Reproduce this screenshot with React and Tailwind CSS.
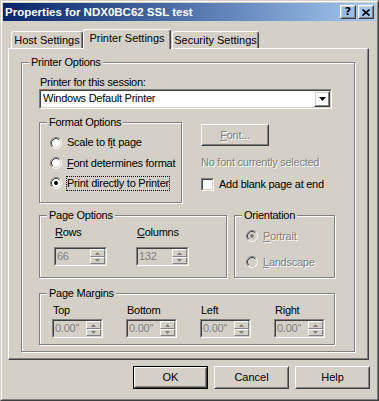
import React from "react";

const sunkenOuter = "border border-t-[#808080] border-l-[#808080] border-r-white border-b-white";
const sunkenInner = "border border-t-[#404040] border-l-[#404040] border-r-[#d4d0c8] border-b-[#d4d0c8]";
const raisedOuter = "border border-t-white border-l-white border-r-[#404040] border-b-[#404040]";
const raisedInner = "border border-t-[#d4d0c8] border-l-[#d4d0c8] border-r-[#808080] border-b-[#808080]";
const dis = "text-[#808080] [text-shadow:1px_1px_0_#fff]";

function Button({ children, className = "", isDefault }) {
  const inner = (
    <div className={`${raisedOuter} h-full w-full`}>
      <div className={`${raisedInner} h-full w-full flex items-center justify-center`}>{children}</div>
    </div>
  );
  return isDefault ? (
    <div className={`border border-black ${className}`}>{inner}</div>
  ) : (
    <div className={className}>{inner}</div>
  );
}

function Radio({ checked, disabled }) {
  return (
    <svg width="12" height="12" viewBox="0 0 12 12" className="shrink-0">
      <circle cx="6" cy="6" r="5" fill={disabled ? "#d4d0c8" : "#fff"} />
      <path d="M2.11 9.89A5.5 5.5 0 0 1 9.89 2.11" stroke="#808080" fill="none" />
      <path d="M9.89 2.11A5.5 5.5 0 0 1 2.11 9.89" stroke="#fff" fill="none" />
      <path d="M2.82 9.18A4.5 4.5 0 0 1 9.18 2.82" stroke="#404040" fill="none" />
      <path d="M9.18 2.82A4.5 4.5 0 0 1 2.82 9.18" stroke="#d4d0c8" fill="none" />
      {checked && <circle cx="6" cy="6" r="2" fill={disabled ? "#808080" : "#000"} />}
    </svg>
  );
}

function GroupBox({ label, className = "", children }) {
  return (
    <div className={`relative border border-[#808080] shadow-[inset_1px_1px_0_#fff,1px_1px_0_#fff] ${className}`}>
      <span className="absolute -top-[7px] left-[7px] bg-[#d4d0c8] px-[2px] leading-[13px] whitespace-nowrap">{label}</span>
      {children}
    </div>
  );
}

function SpinBtn({ up, className = "" }) {
  return (
    <div className={`border border-t-white border-l-white border-r-[#808080] border-b-[#808080] bg-[#d4d0c8] flex items-center justify-center ${className}`}>
      <svg width="5" height="3" viewBox="0 0 5 3">
        <path d={up ? "M2.5 0L5 3H0Z" : "M0 0H5L2.5 3Z"} fill="#808080" />
      </svg>
    </div>
  );
}

function Spin({ value, className = "" }) {
  return (
    <div className={`${sunkenOuter} h-[19px] ${className}`}>
      <div className={`${sunkenInner} h-full flex`}>
        <div className="flex-1 pl-[1px] leading-[15px] text-[#808080] overflow-hidden whitespace-nowrap">{value}</div>
        <div className="w-[15px] flex flex-col">
          <SpinBtn up className="h-[8px]" />
          <SpinBtn className="h-[7px]" />
        </div>
      </div>
    </div>
  );
}

function RadioRow({ checked, disabled, focus, children, className = "" }) {
  return (
    <div className={`flex items-center ${className}`}>
      <Radio checked={checked} disabled={disabled} />
      <span
        className={`ml-[4px] border leading-[13px] whitespace-nowrap ${focus ? "border-dotted border-black" : "border-transparent"} ${disabled ? dis : ""}`}
      >
        {children}
      </span>
    </div>
  );
}

export default function App() {
  return (
    <div className="w-[379px] h-[401px] bg-[#d4d0c8] font-['Liberation_Sans',Arial,sans-serif] text-[11px] leading-[13px] text-black">
      <div className="w-full h-full border border-t-[#d4d0c8] border-l-[#d4d0c8] border-r-[#404040] border-b-[#404040]">
        <div className="w-full h-full border border-t-white border-l-white border-r-[#808080] border-b-[#808080] p-[1px] flex flex-col">
          {/* Title bar */}
          <div className="h-[18px] shrink-0 bg-gradient-to-r from-[#0a246a] to-[#a6caf0] flex items-center pl-[2px] pr-[2px]">
            <span className="text-white font-bold text-[11.5px] whitespace-nowrap">Properties for NDX0BC62 SSL test</span>
            <div className="ml-auto flex gap-[2px]">
              <Button className="w-[16px] h-[14px]">
                <span className="font-bold text-[11px] leading-[10px] font-['DejaVu_Sans',sans-serif]">?</span>
              </Button>
              <Button className="w-[16px] h-[14px]">
                <svg width="8" height="7" viewBox="0 0 8 7">
                  <path d="M0.5 0.5L7.5 6.5M7.5 0.5L0.5 6.5" stroke="#000" strokeWidth="1.6" />
                </svg>
              </Button>
            </div>
          </div>

          {/* Tabs */}
          <div className="mt-[8px] h-[19px] shrink-0 flex items-end pl-[8px] relative z-10">
            <div className="w-[72px] h-[17px] border border-b-0 border-t-white border-l-white border-r-[#404040] rounded-t-[3px] shadow-[inset_-1px_0_0_#808080] flex items-center justify-center whitespace-nowrap">
              Host Settings
            </div>
            <div className="w-[88px] h-[20px] -mb-[1px] bg-[#d4d0c8] border border-b-0 border-t-white border-l-white border-r-[#404040] rounded-t-[3px] shadow-[inset_-1px_0_0_#808080] flex items-center justify-center pb-[2px] whitespace-nowrap">
              Printer Settings
            </div>
            <div className="ml-[1px] w-[87px] h-[17px] border border-b-0 border-t-white border-l-white border-r-[#404040] rounded-t-[3px] shadow-[inset_-1px_0_0_#808080] flex items-center justify-center whitespace-nowrap">
              Security Settings
            </div>
          </div>

          {/* Tab panel */}
          <div className="ml-[5px] w-[361px] h-[312px] shrink-0 border border-t-white border-l-white border-r-[#404040] border-b-[#404040] tracking-[-0.25px]">
            <div className="h-full flex flex-col border-r border-b border-r-[#808080] border-b-[#808080]">
              <GroupBox label="Printer Options" className="ml-[12px] mt-[13px] w-[334px] h-[290px]">
                <div className="ml-[18px] mt-[13px] whitespace-nowrap">Printer for this session:</div>
                {/* Combo */}
                <div className={`${sunkenOuter} ml-[17px] w-[293px] h-[20px]`}>
                  <div className={`${sunkenInner} h-full flex bg-white`}>
                    <div className="flex-1 pl-[2px] leading-[14px] whitespace-nowrap">Windows Default Printer</div>
                    <Button className="w-[16px] h-full">
                      <svg width="7" height="4" viewBox="0 0 7 4">
                        <path d="M0 0H7L3.5 4Z" fill="#000" />
                      </svg>
                    </Button>
                  </div>
                </div>

                <div className="flex mt-[13px] ml-[17px]">
                  <GroupBox label="Format Options" className="w-[143px] h-[81px] shrink-0">
                    <div className="pl-[10px] pt-[9px]">
                      <RadioRow className="h-[21px]">
                        Scale to f<u>i</u>t page
                      </RadioRow>
                      <RadioRow className="h-[20px]">
                        <u>F</u>ont determines format
                      </RadioRow>
                      <RadioRow className="h-[20px]" checked focus>
                        Print directly to Printer
                      </RadioRow>
                    </div>
                  </GroupBox>
                  <div className="ml-[19px] pt-[2px]">
                    <Button className="w-[68px] h-[22px]">
                      <span className={dis}>
                        <u>F</u>ont...
                      </span>
                    </Button>
                    <div className={`mt-[10px] whitespace-nowrap ${dis}`}>No font currently selected</div>
                    <div className="mt-[9px] flex items-center">
                      <div className={`${sunkenOuter} w-[13px] h-[13px] shrink-0`}>
                        <div className={`${sunkenInner} w-full h-full bg-white`} />
                      </div>
                      <span className="ml-[5px] whitespace-nowrap">Add blank page at end</span>
                    </div>
                  </div>
                </div>

                <div className="flex mt-[12px] ml-[17px]">
                  <GroupBox label="Page Options" className="w-[188px] h-[63px] shrink-0">
                    <div className="flex pl-[14px] pt-[10px]">
                      <div className="shrink-0">
                        <div className="ml-[1px]">
                          <u>R</u>ows
                        </div>
                        <Spin value="66" className="mt-[8px] w-[53px]" />
                      </div>
                      <div className="ml-[29px] shrink-0">
                        <div className="ml-[1px]">
                          <u>C</u>olumns
                        </div>
                        <Spin value="132" className="mt-[8px] w-[53px]" />
                      </div>
                    </div>
                  </GroupBox>
                  <GroupBox label="Orientation" className="ml-[7px] w-[101px] h-[63px] shrink-0">
                    <div className="pl-[11px] pt-[10px]">
                      <RadioRow className="h-[20px]" checked disabled>
                        <u>P</u>ortrait
                      </RadioRow>
                      <RadioRow className="h-[20px] mt-[6px]" disabled>
                        <u>L</u>andscape
                      </RadioRow>
                    </div>
                  </GroupBox>
                </div>

                <GroupBox label="Page Margins" className="mt-[15px] ml-[17px] w-[296px] h-[52px]">
                  <div className="flex pl-[12px] pt-[10px]">
                    {["Top", "Bottom", "Left", "Right"].map((l) => (
                      <div key={l} className="w-[74px] shrink-0">
                        <div className="ml-[1px]">{l}</div>
                        <Spin value={"0.00''"} className="mt-[2px] w-[51px]" />
                      </div>
                    ))}
                  </div>
                </GroupBox>
              </GroupBox>
            </div>
          </div>

          {/* Buttons */}
          <div className="flex mt-[6px] pl-[130px] gap-[6px]">
            <Button isDefault className="w-[75px] h-[23px]">OK</Button>
            <Button className="w-[75px] h-[23px]">Cancel</Button>
            <Button className="w-[75px] h-[23px]">Help</Button>
          </div>
        </div>
      </div>
    </div>
  );
}
